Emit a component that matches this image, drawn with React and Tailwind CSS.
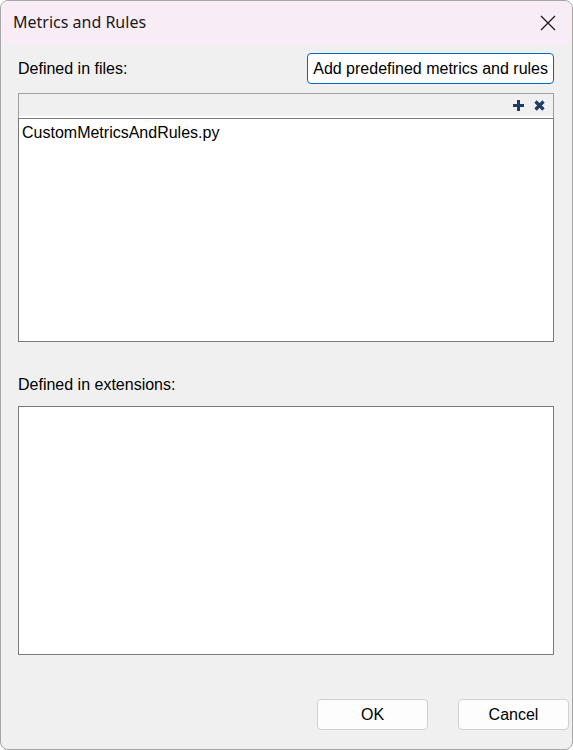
import React from 'react';

const App = () => {
  return (
    <div className="w-[573px] h-[750px] bg-white font-['Liberation_Sans',Arial,sans-serif] text-[16px] text-black">
      <div className="w-full h-full flex flex-col rounded-[8px] border border-[#a6a6a6] bg-[#f0f0f0] overflow-hidden">
        {/* title bar */}
        <div className="h-[44px] shrink-0 bg-[#f8ecf6] flex items-center justify-between pl-[12px] pr-[16px]">
          <span className="text-[16px] font-['Noto_Sans',sans-serif] text-[#1a1a1a] -mt-[2px]">Metrics and Rules</span>
          <svg width="16" height="16" viewBox="0 0 16 16" className="text-[#1a1a1a]">
            <path d="M1 1 L15 15 M15 1 L1 15" stroke="currentColor" strokeWidth="1.3" fill="none" />
          </svg>
        </div>

        <div className="flex-1 flex flex-col pl-[17px] pr-[18px]">
          <div className="flex items-center justify-between mt-[8px] h-[31px]">
            <span>Defined in files:</span>
            <button className="h-[31px] px-[5px] bg-white border border-[#0067c0] rounded-[4px]">
              Add predefined metrics and rules
            </button>
          </div>

          {/* toolbar */}
          <div className="mt-[9px] h-[23px] border border-[#a0a0a0] border-b-0 bg-[#f0f0f0] flex items-center justify-end gap-[10px] pr-[8px]">
            <svg width="11" height="11" viewBox="0 0 11 11">
              <path d="M4 0 H7 V4 H11 V7 H7 V11 H4 V7 H0 V4 H4 Z" fill="#1f3d63" />
            </svg>
            <svg width="11" height="11" viewBox="0 0 11 11">
              <path d="M1.5 1.5 L9.5 9.5 M9.5 1.5 L1.5 9.5" stroke="#1f3d63" strokeWidth="3.2" />
            </svg>
          </div>
          <div className="h-[2px] bg-white border-x border-[#a0a0a0]" />
          <div className="h-[224px] bg-white border border-[#7a7a7a] px-[3px] pt-[2px]">
            CustomMetricsAndRules.py
          </div>

          <div className="mt-[31px] h-[20px]">Defined in extensions:</div>

          <div className="mt-[13px] h-[249px] bg-white border border-[#7a7a7a]" />

          <div className="mt-auto mb-[19px] flex justify-end gap-[30px] -mr-[15px]">
            <button className="w-[111px] h-[31px] bg-[#fdfdfd] border border-[#d0d0d0] rounded-[4px]">OK</button>
            <button className="w-[111px] h-[31px] bg-[#fdfdfd] border border-[#d0d0d0] rounded-[4px]">Cancel</button>
          </div>
        </div>
      </div>
    </div>
  );
};

export default App;
